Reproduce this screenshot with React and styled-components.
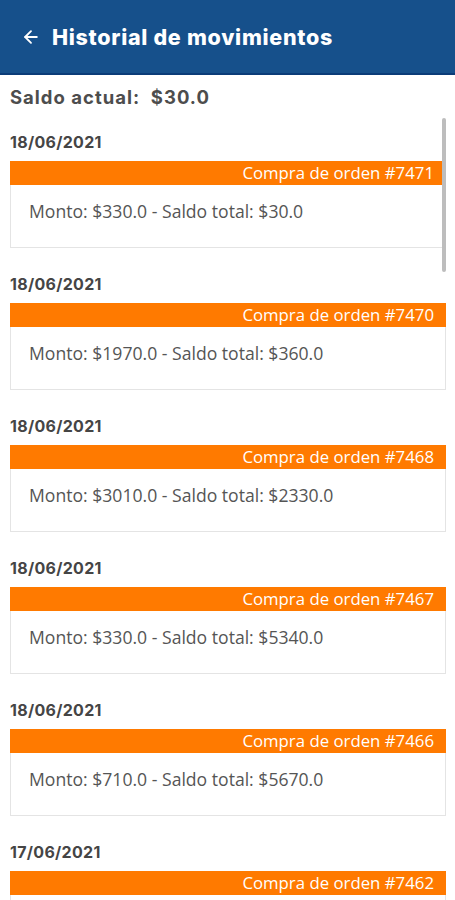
import styled, { createGlobalStyle } from "styled-components";
import { ArrowLeft } from "lucide-react";

const GlobalStyle = createGlobalStyle`
  html, body {
    margin: 0;
    padding: 0;
    background: #ffffff;
  }
  body {
    font-family: "Open Sans", "Noto Sans", sans-serif;
  }
`;

const Screen = styled.div`
  position: relative;
  width: 455px;
  height: 900px;
  overflow: hidden;
  background: #ffffff;
`;

const Header = styled.header`
  height: 73px;
  background: #16508b;
  border-bottom: 2px solid #0b3c78;
  display: flex;
  align-items: center;
  padding: 0 0 0 21px;
  gap: 11px;
  color: #ffffff;
  box-sizing: content-box;
`;

const Title = styled.h1`
  margin: 0;
  font-family: "Inter", "Noto Sans", sans-serif;
  font-weight: 800;
  font-size: 21.5px;
  letter-spacing: 0.7px;
`;

const Balance = styled.div`
  margin: 10px 0 0 10px;
  line-height: 24px;
  font-family: "Inter", "Noto Sans", sans-serif;
  font-weight: 700;
  font-size: 18.5px;
  letter-spacing: 1px;
  color: #4d4d4d;
  white-space: pre;
`;

const List = styled.ul`
  list-style: none;
  margin: 22px 0 0 0;
  padding: 0 9px 0 10px;
`;

const Item = styled.li`
  margin-bottom: 25px;
`;

const Date = styled.div`
  line-height: 22px;
  font-family: "Inter", "Noto Sans", sans-serif;
  font-weight: 700;
  font-size: 16px;
  letter-spacing: 0.3px;
  color: #454545;
  margin-bottom: 8px;
`;

const Card = styled.div`
  border: 1px solid #e4e4e4;
  border-top: none;
`;

const OrderBar = styled.div`
  height: 24px;
  background: #ff7a00;
  color: #ffffff;
  font-size: 16.8px;
  line-height: 24px;
  text-align: right;
  padding-right: 12px;
  margin: 0 -1px;
`;

const Body = styled.div`
  height: 62px;
  box-sizing: border-box;
  padding: 15px 0 0 18px;
  font-size: 17.6px;
  line-height: 22px;
  color: #555555;
`;

const Scrollbar = styled.div`
  position: absolute;
  top: 118px;
  right: 9px;
  width: 4px;
  height: 154px;
  border-radius: 2px;
  background: #bdbdbd;
`;

const movements = [
  { date: "18/06/2021", order: "7471", amount: "330.0", total: "30.0" },
  { date: "18/06/2021", order: "7470", amount: "1970.0", total: "360.0" },
  { date: "18/06/2021", order: "7468", amount: "3010.0", total: "2330.0" },
  { date: "18/06/2021", order: "7467", amount: "330.0", total: "5340.0" },
  { date: "18/06/2021", order: "7466", amount: "710.0", total: "5670.0" },
  { date: "17/06/2021", order: "7462", amount: "380.0", total: "6380.0" },
];

export default function App() {
  return (
    <Screen>
      <GlobalStyle />
      <Header>
        <ArrowLeft size={20} strokeWidth={2.2} color="#ffffff" />
        <Title>Historial de movimientos</Title>
      </Header>
      <Balance>{"Saldo actual:  $30.0"}</Balance>
      <List>
        {movements.map((m) => (
          <Item key={m.order}>
            <Date>{m.date}</Date>
            <Card>
              <OrderBar>Compra de orden #{m.order}</OrderBar>
              <Body>
                Monto: ${m.amount} - Saldo total: ${m.total}
              </Body>
            </Card>
          </Item>
        ))}
      </List>
      <Scrollbar />
    </Screen>
  );
}
